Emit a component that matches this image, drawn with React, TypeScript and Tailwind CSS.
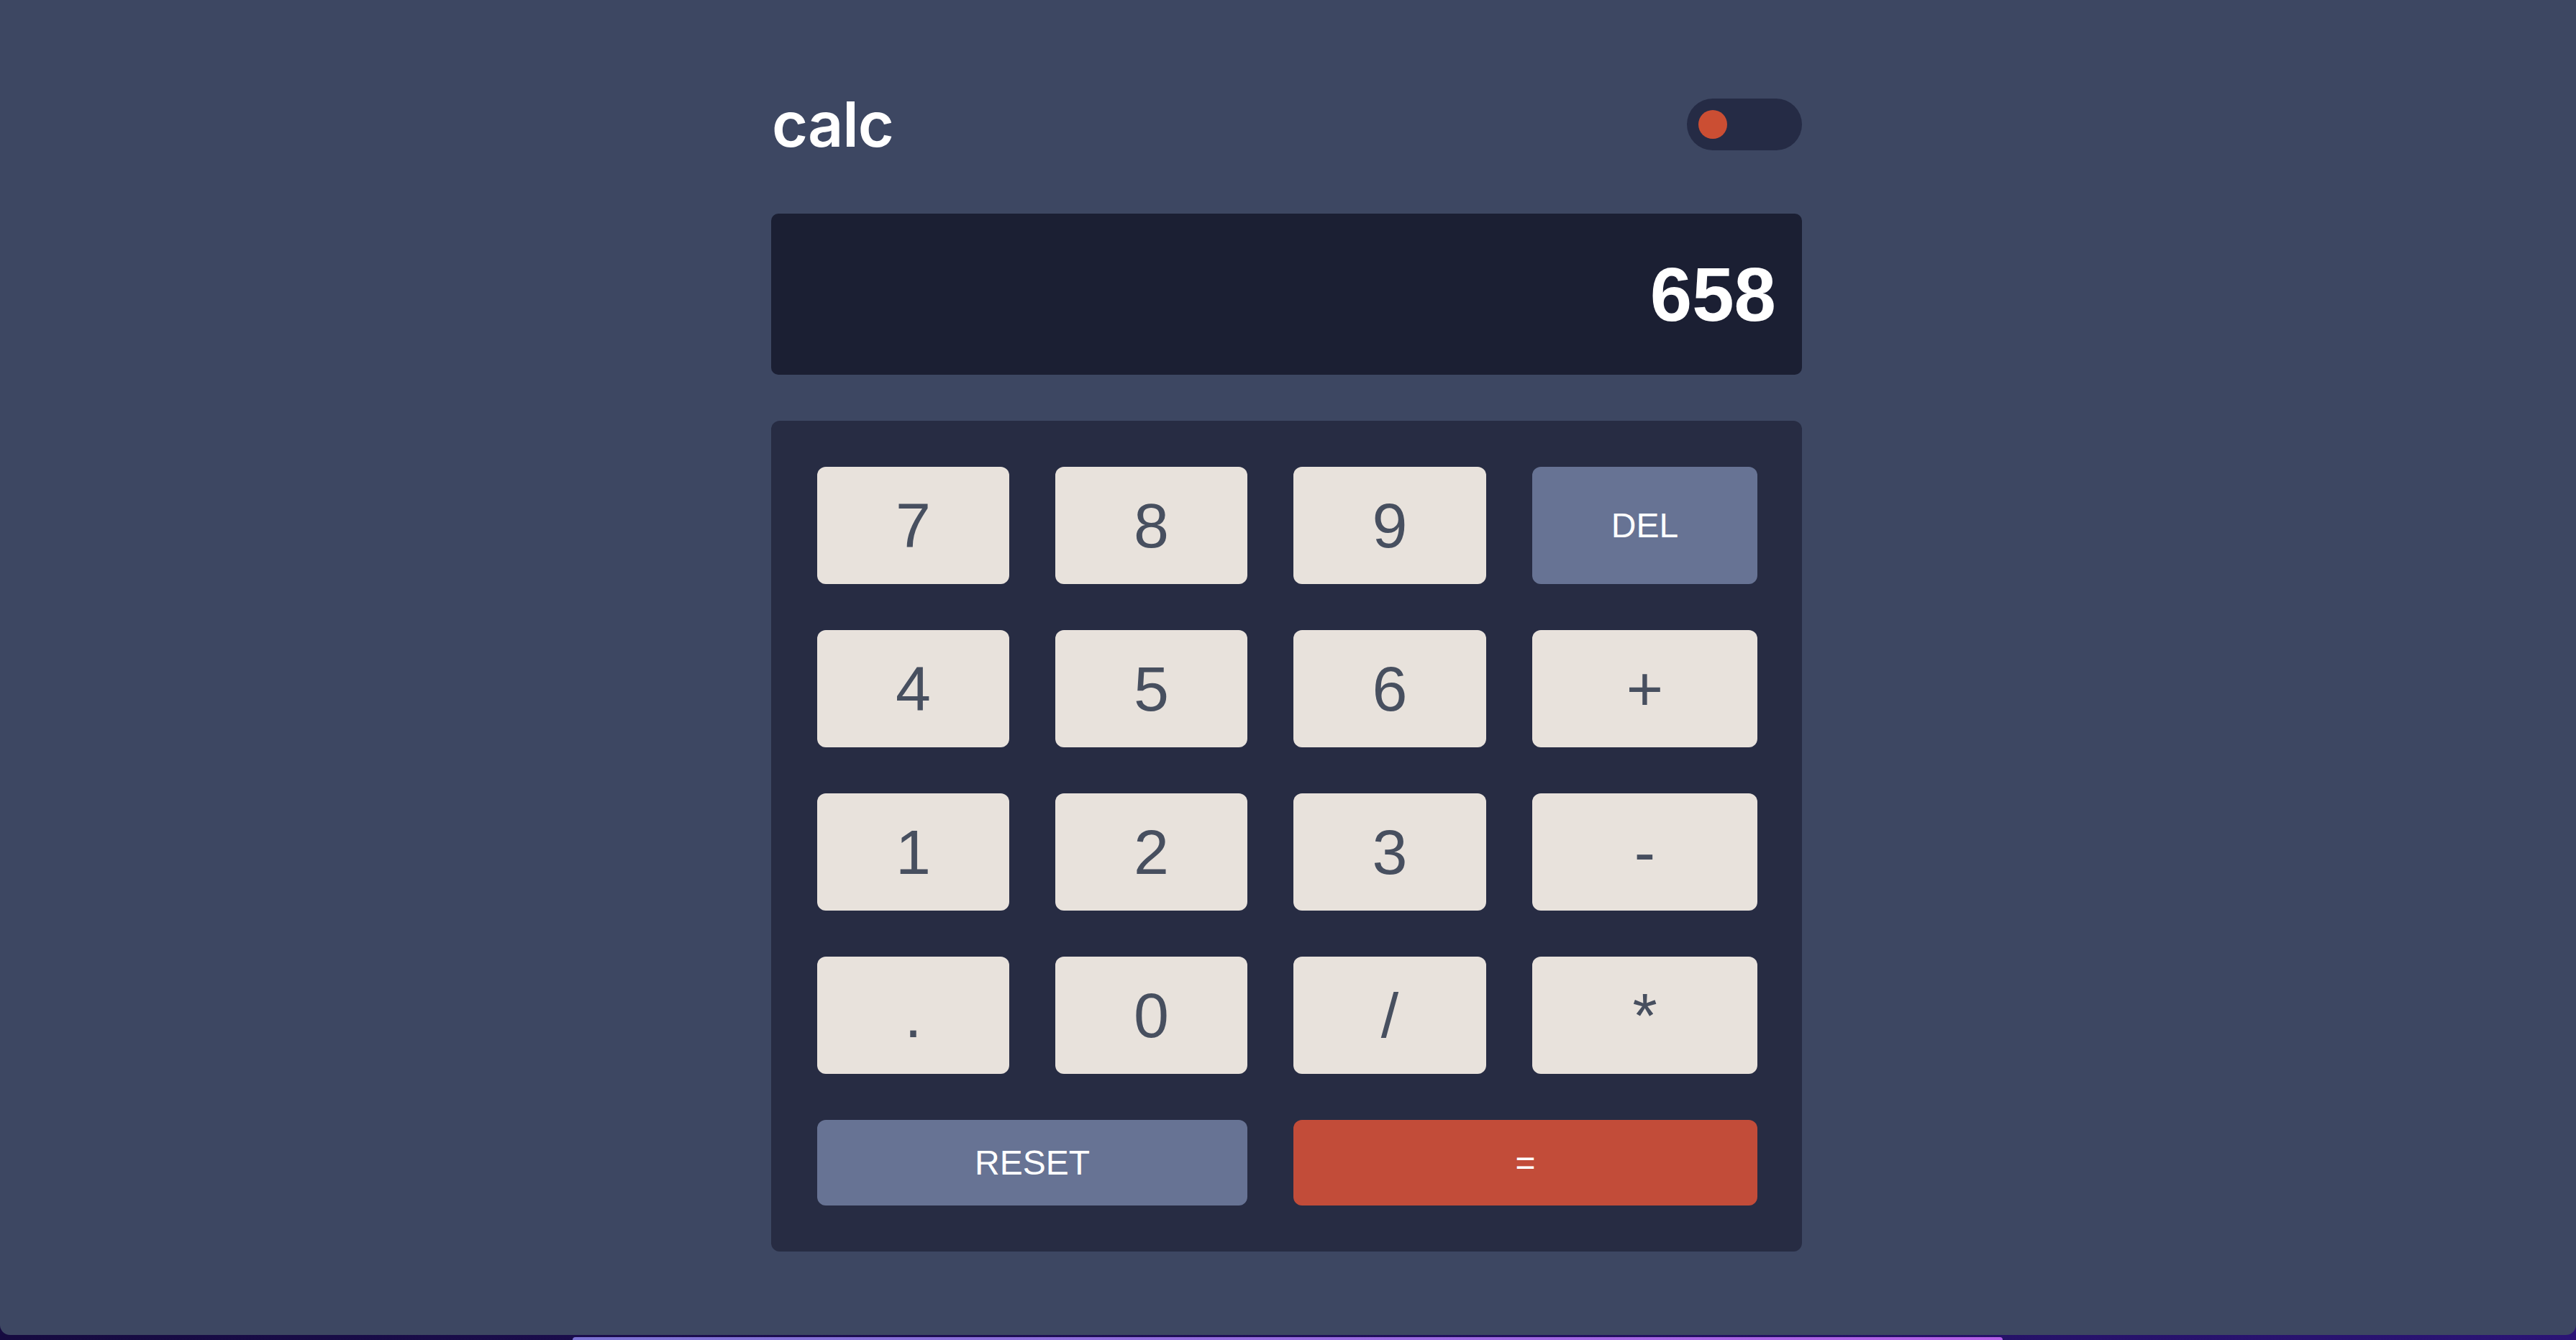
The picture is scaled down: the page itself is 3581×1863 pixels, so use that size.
import React from "react";

type Key = {
  label: string;
  tone: "plain" | "muted" | "accent";
};

const numberRows: Key[] = [
  { label: "7", tone: "plain" },
  { label: "8", tone: "plain" },
  { label: "9", tone: "plain" },
  { label: "DEL", tone: "muted" },
  { label: "4", tone: "plain" },
  { label: "5", tone: "plain" },
  { label: "6", tone: "plain" },
  { label: "+", tone: "plain" },
  { label: "1", tone: "plain" },
  { label: "2", tone: "plain" },
  { label: "3", tone: "plain" },
  { label: "-", tone: "plain" },
  { label: ".", tone: "plain" },
  { label: "0", tone: "plain" },
  { label: "/", tone: "plain" },
  { label: "*", tone: "plain" },
];

const toneClass = {
  plain: "bg-[#e8e2dc] text-[#474f5f] text-[88px]",
  muted: "bg-[#677394] text-white text-[48px]",
  accent: "bg-[#c24c39] text-white text-[48px]",
};

function CalcKey({ k }: { k: Key }) {
  return (
    <button
      type="button"
      className={`flex h-[163px] items-center justify-center rounded-[12px] leading-none ${toneClass[k.tone]}`}
      style={{ fontFamily: '"Liberation Sans", Arial, sans-serif' }}
    >
      {k.label}
    </button>
  );
}

export default function App() {
  return (
    <div className="relative h-[1863px] w-full overflow-hidden bg-[linear-gradient(90deg,#160b40,#1f0f58_50%,#2b1475)]">
      <main className="flex h-[1856px] w-full justify-center rounded-b-[14px] bg-[#3d4762] pr-[4px]">
        <div className="w-[1433px] pt-[137px]">
          <header className="flex h-[72px] items-center justify-between">
            <h1
              className="pl-[1px] text-[86px] font-semibold leading-none tracking-[-1px] text-white"
              style={{ fontFamily: "Inter, sans-serif" }}
            >
              calc
            </h1>
            <div className="flex h-[72px] w-[160px] items-center rounded-full bg-[#252b45] pl-[16px]">
              <span className="h-[40px] w-[40px] rounded-full bg-[#cb4e33]" />
            </div>
          </header>

          <section className="mt-[88px] flex h-[224px] items-center justify-end rounded-[10px] bg-[#1b1f33] pr-[36px]">
            <span
              className="text-[105px] font-bold leading-none text-white"
              style={{ fontFamily: '"Liberation Sans", Arial, sans-serif' }}
            >
              658
            </span>
          </section>

          <section className="mt-[64px] grid grid-cols-[267px_267px_268px_313px] gap-[64px] rounded-[12px] bg-[#272c43] p-[64px]">
            {numberRows.map((k) => (
              <CalcKey key={k.label} k={k} />
            ))}
            <button
              type="button"
              className="col-span-2 flex h-[119px] items-center justify-center rounded-[12px] bg-[#677394] text-[48px] leading-none text-white"
              style={{ fontFamily: '"Liberation Sans", Arial, sans-serif' }}
            >
              RESET
            </button>
            <button
              type="button"
              className="col-span-2 flex h-[119px] items-center justify-center rounded-[12px] bg-[#c24c39] text-[48px] leading-none text-white"
              style={{ fontFamily: '"Liberation Sans", Arial, sans-serif' }}
            >
              =
            </button>
          </section>
        </div>
      </main>
      <div className="absolute bottom-0 left-[796px] h-[4px] w-[1988px] rounded-t-[8px] bg-[linear-gradient(90deg,#7a72d2,#9a68e0_60%,#b45ee6)]" />
    </div>
  );
}
